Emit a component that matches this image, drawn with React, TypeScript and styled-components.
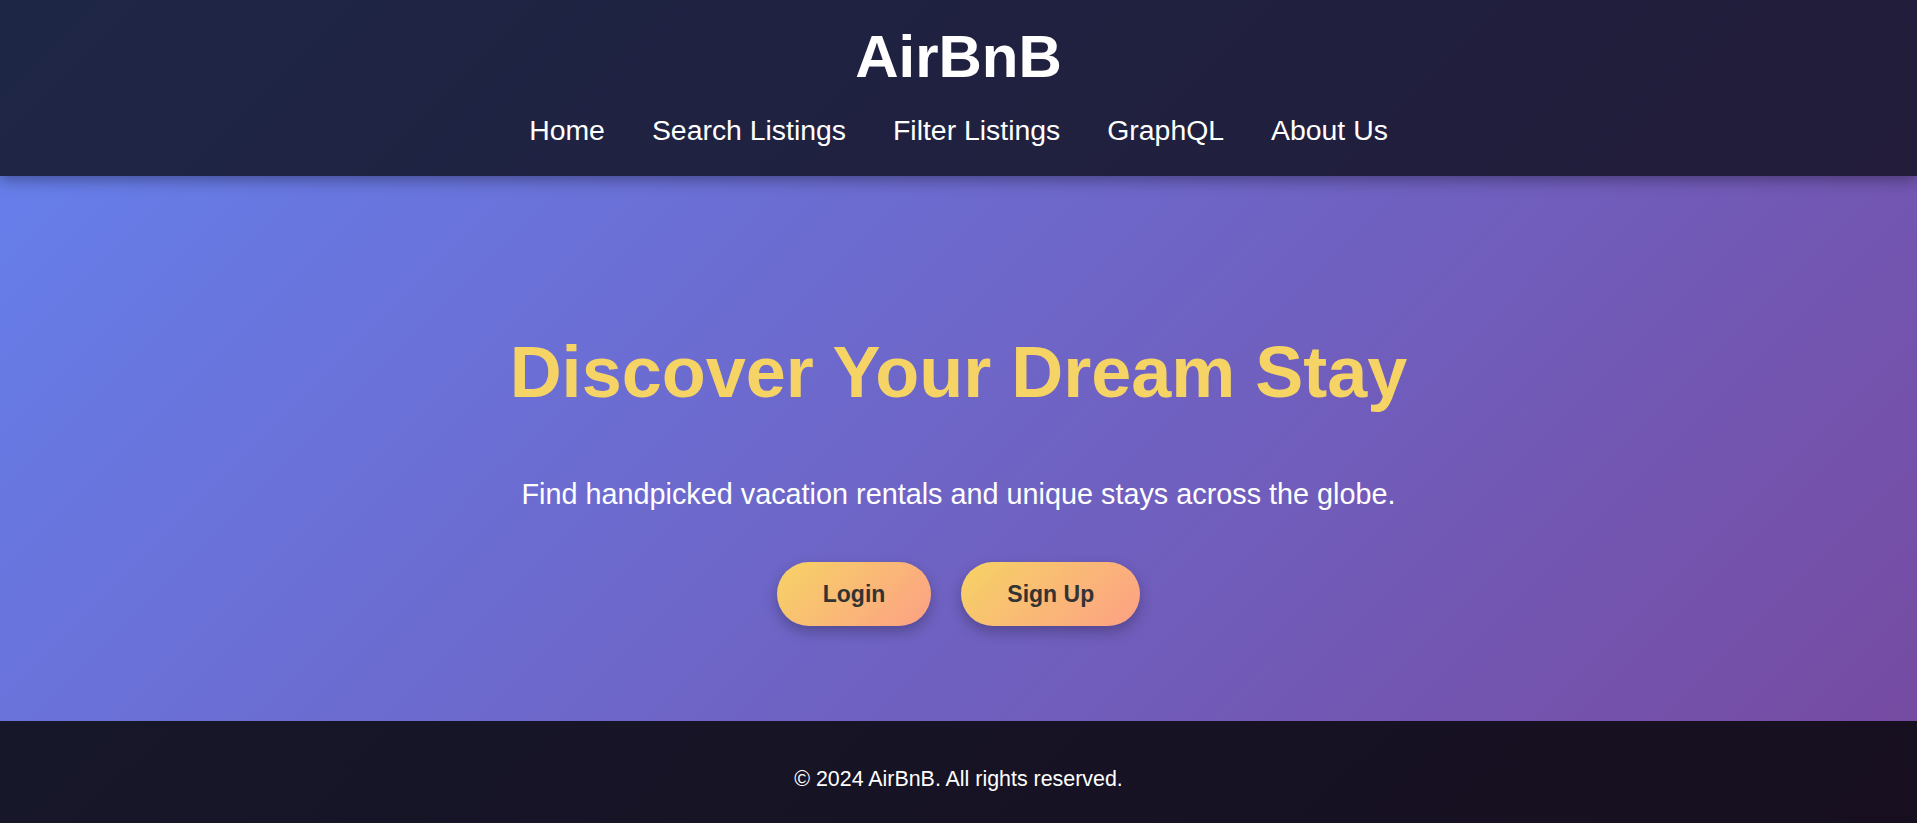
import React from "react";
import styled, { createGlobalStyle } from "styled-components";

const GlobalStyle = createGlobalStyle`
  * { box-sizing: border-box; }
  html, body { margin: 0; padding: 0; }
  body {
    font-family: "Liberation Sans", Arial, sans-serif;
    background: #171729;
    color: #ffffff;
  }
`;

const Page = styled.div`
  display: flex;
  flex-direction: column;
  min-height: 100vh;
`;

const Header = styled.header`
  position: relative;
  z-index: 2;
  display: flex;
  flex-direction: column;
  align-items: center;
  padding: 21px 20px 29px;
  background: linear-gradient(135deg, #1e2646 0%, #221c3a 100%);
  box-shadow: 0 4px 14px rgba(0, 0, 0, 0.35);
`;

const Logo = styled.h1`
  margin: 0;
  font-size: 60px;
  line-height: 1.2;
  font-weight: 700;
  color: #ffffff;
`;

const Nav = styled.nav`
  display: flex;
  gap: 47px;
  margin-top: 20px;
`;

const NavLink = styled.a`
  font-size: 28.4px;
  line-height: 1.2;
  color: #ffffff;
  text-decoration: none;
  cursor: pointer;
`;

const Hero = styled.main`
  position: relative;
  z-index: 1;
  display: flex;
  flex-direction: column;
  align-items: center;
  text-align: center;
  padding: 153px 20px 95px;
  background: linear-gradient(135deg, #667eea 0%, #764ba2 100%);
`;

const Title = styled.h2`
  margin: 0;
  font-size: 72px;
  line-height: 1.2;
  font-weight: 700;
  color: #f6d365;
`;

const Subtitle = styled.p`
  margin: 62px 0 0;
  font-size: 28.8px;
  line-height: 1.2;
  color: #ffffff;
`;

const Actions = styled.div`
  display: flex;
  gap: 30px;
  margin-top: 50px;
`;

const PillButton = styled.button`
  height: 64px;
  padding: 0 46px;
  border: none;
  border-radius: 32px;
  background: linear-gradient(135deg, #f6d365 0%, #fda085 100%);
  color: #333333;
  font-family: "Liberation Sans", Arial, sans-serif;
  font-size: 23px;
  font-weight: 700;
  cursor: pointer;
  box-shadow: 0 6px 14px rgba(0, 0, 0, 0.25);
`;

const Footer = styled.footer`
  display: flex;
  justify-content: center;
  padding: 46px 20px 42px;
  background: linear-gradient(135deg, #161729 0%, #170f20 100%);
`;

const FooterText = styled.p`
  margin: 0;
  font-size: 21.4px;
  line-height: 1.2;
  color: #ffffff;
`;

export default function App() {
  const links = ["Home", "Search Listings", "Filter Listings", "GraphQL", "About Us"];
  return (
    <Page>
      <GlobalStyle />
      <Header>
        <Logo>AirBnB</Logo>
        <Nav>
          {links.map((l) => (
            <NavLink key={l}>{l}</NavLink>
          ))}
        </Nav>
      </Header>
      <Hero>
        <Title>Discover Your Dream Stay</Title>
        <Subtitle>Find handpicked vacation rentals and unique stays across the globe.</Subtitle>
        <Actions>
          <PillButton>Login</PillButton>
          <PillButton>Sign Up</PillButton>
        </Actions>
      </Hero>
      <Footer>
        <FooterText>© 2024 AirBnB. All rights reserved.</FooterText>
      </Footer>
    </Page>
  );
}
